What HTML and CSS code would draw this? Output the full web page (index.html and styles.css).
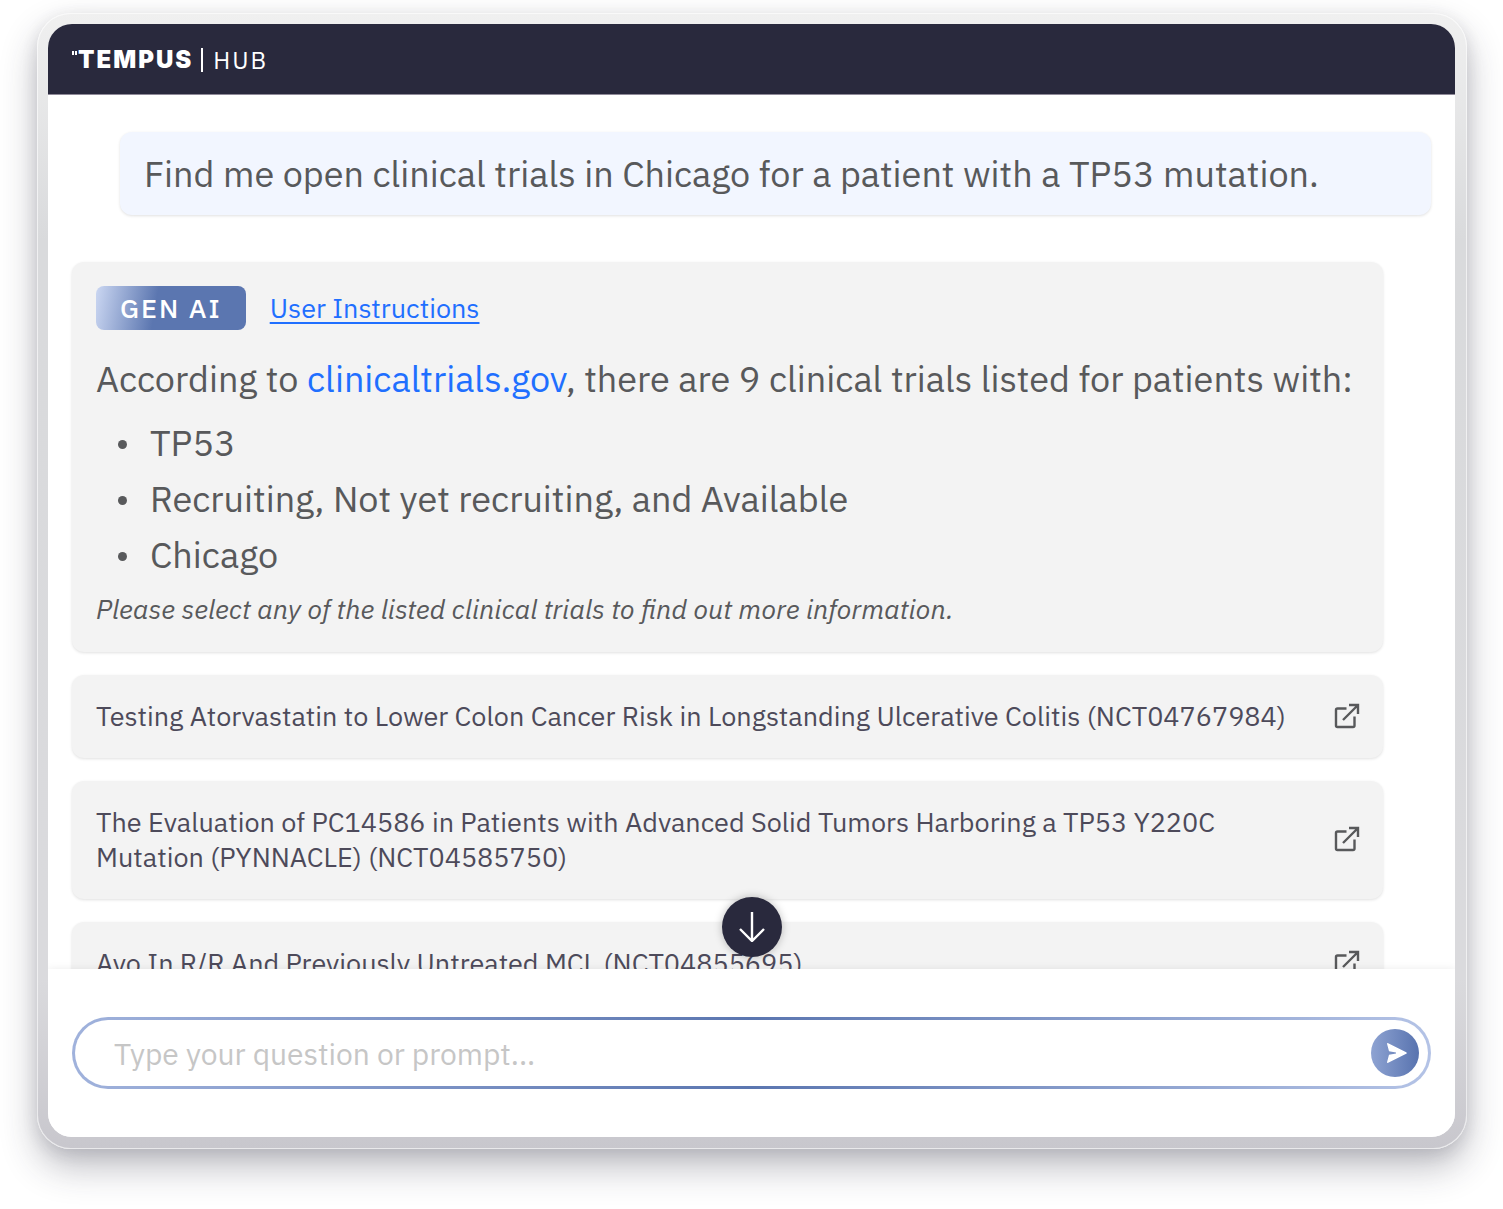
FILE: index.html
```html
<!DOCTYPE html>
<html lang="en">
<head>
    <meta charset="UTF-8">
    <meta name="viewport" content="width=device-width, initial-scale=1.0">
    <title>Tempus Hub</title>
    <link rel="stylesheet" href="styles.css">
</head>
<body>
    <div class="frame">
        <div class="screen">
            <!-- Header -->
            <header class="topbar">
                <svg class="logo-ticks" viewBox="0 0 6 17" aria-hidden="true">
                    <path d="M0 0h2v4H0zM3 0h2v4H3z"/>
                </svg>
                <span class="logo-name">TEMPUS</span>
                <span class="logo-divider"></span>
                <span class="logo-hub">HUB</span>
            </header>

            <!-- Conversation -->
            <main class="chat">
                <p class="bubble question">Find me open clinical trials in Chicago for a patient with a TP53 mutation.</p>

                <section class="bubble answer">
                    <div class="answer-head">
                        <span class="badge">GEN AI</span>
                        <a class="help-link" href="#">User Instructions</a>
                    </div>
                    <p class="answer-text">According to <a href="#">clinicaltrials.gov</a>, there are 9 clinical trials listed for patients with:</p>
                    <ul class="criteria">
                        <li>TP53</li>
                        <li>Recruiting, Not yet recruiting, and Available</li>
                        <li>Chicago</li>
                    </ul>
                    <p class="hint">Please select any of the listed clinical trials to find out more information.</p>
                </section>

                <a class="bubble trial" href="#">
                    <span>Testing Atorvastatin to Lower Colon Cancer Risk in Longstanding Ulcerative Colitis (NCT04767984)</span>
                    <svg class="open-icon" viewBox="0 0 24 24" aria-hidden="true">
                        <path d="M11.500 4.500H2.500Q1 4.500 1 6V21.500Q1 23 2.500 23H18Q19.500 23 19.500 21.500V12.500M14 1h9v9M23 1L8 16"/>
                    </svg>
                </a>
                <a class="bubble trial" href="#">
                    <span>The Evaluation of PC14586 in Patients with Advanced Solid Tumors Harboring a TP53 Y220C Mutation (PYNNACLE) (NCT04585750)</span>
                    <svg class="open-icon" viewBox="0 0 24 24" aria-hidden="true">
                        <path d="M11.500 4.500H2.500Q1 4.500 1 6V21.500Q1 23 2.500 23H18Q19.500 23 19.500 21.500V12.500M14 1h9v9M23 1L8 16"/>
                    </svg>
                </a>
                <a class="bubble trial" href="#">
                    <span>Avo In R/R And Previously Untreated MCL (NCT04855695)</span>
                    <svg class="open-icon" viewBox="0 0 24 24" aria-hidden="true">
                        <path d="M11.500 4.500H2.500Q1 4.500 1 6V21.500Q1 23 2.500 23H18Q19.500 23 19.500 21.500V12.500M14 1h9v9M23 1L8 16"/>
                    </svg>
                </a>
            </main>

            <!-- Prompt -->
            <form class="composer">
                <button class="scroll-down" type="button" aria-label="Scroll down">
                    <svg viewBox="0 0 30 30" aria-hidden="true">
                        <path d="M15 0v28M3 17l12 12 12-12"/>
                    </svg>
                </button>
                <div class="prompt-box">
                    <input class="prompt" type="text" placeholder="Type your question or prompt..." aria-label="Type your question or prompt">
                    <button class="send" type="submit" aria-label="Send">
                        <svg viewBox="0 0 20 20" aria-hidden="true">
                            <path d="M0 0.800Q0 -0.300 1.200 0.200L19.200 9.200Q20.500 10 19.200 10.800L1.200 19.800Q0 20.300 0 19.200L2 11.800 9 10.600V9.400L2 8.200Z"/>
                        </svg>
                    </button>
                </div>
            </form>
        </div>
    </div>
</body>
</html>
```
FILE: styles.css
```css
* {
    box-sizing: border-box;
}
body {
    font-family: 'IBM Plex Sans', 'Roboto', sans-serif;
    display: flex;
    height: 100vh;
    margin: 0;
    padding: 13px 36px 60px 37px;
    background-color: #fff;
    color: #58595b;
}
p, ul {
    margin: 0;
}
.frame {
    flex: 1;
    display: flex;
    min-width: 0;
    padding: 10px 11px 11px 10px;
    border: 1px solid rgba(255, 255, 255, 0.6);
    border-radius: 34px;
    background: linear-gradient(#f0f0f0, #d9dadc 20%, #dadadd 85%, #c8c7cd) border-box;
    box-shadow: 0 18px 36px rgba(40, 40, 60, 0.3), 0 4px 16px rgba(40, 40, 60, 0.12);
}
.screen {
    flex: 1;
    display: flex;
    flex-direction: column;
    min-width: 0;
    border-radius: 24px;
    background-color: #fff;
    overflow: hidden;
}

/* Header */
.topbar {
    display: flex;
    align-items: center;
    flex-shrink: 0;
    height: 71px;
    padding: 1px 24px 0;
    background-color: #29293d;
    border-bottom: 1px solid #8f8a99;
    color: #fff;
}
.logo-ticks {
    width: 6px;
    height: 17px;
    fill: #fff;
}
.logo-name {
    font-family: 'Inter', sans-serif;
    font-size: 24px;
    font-weight: 900;
    letter-spacing: 2px;
}
.logo-divider {
    width: 2px;
    height: 24px;
    margin: 0 10px 0 8px;
    background-color: #fff;
}
.logo-hub {
    font-size: 24px;
    letter-spacing: 2px;
}

/* Conversation */
.chat {
    flex: 1;
    display: flex;
    flex-direction: column;
    gap: 23px;
    min-height: 0;
    padding: 37px 72px 0 24px;
    overflow: hidden;
}
.bubble {
    flex-shrink: 0;
    border-radius: 12px;
    background-color: #f3f3f3;
    box-shadow: 0 1px 3px rgba(0, 0, 0, 0.12);
}
.question {
    margin: 0 -48px 24px 48px;
    padding: 18px 24px;
    background-color: #f2f6ff;
    font-size: 36px;
    line-height: 47px;
}
.answer {
    padding: 24px;
}
.answer-head {
    display: flex;
    align-items: center;
    gap: 24px;
    margin-bottom: 24px;
}
.badge {
    padding: 0 24px;
    border-radius: 8px;
    background: linear-gradient(100deg, #cbd7f2, #5b76b0 40%);
    color: #fff;
    font-size: 27px;
    font-weight: 500;
    line-height: 44px;
    letter-spacing: 2px;
}
.help-link {
    color: #1f6fff;
    font-size: 27px;
    line-height: 34px;
    text-decoration-thickness: 2px;
    text-underline-offset: 4px;
}
.answer-text {
    margin-bottom: 11px;
    font-size: 36px;
    line-height: 50px;
}
.answer-text a {
    color: #1f6fff;
    text-decoration: none;
}
.criteria {
    margin-bottom: 9px;
    padding: 0;
    list-style: none;
    font-size: 36px;
    line-height: 56px;
}
.criteria li {
    display: flex;
    align-items: center;
    gap: 23px;
    padding-left: 22px;
}
.criteria li::before {
    content: "";
    width: 9px;
    height: 9px;
    margin-top: 2px;
    border-radius: 50%;
    background-color: #58595b;
}
.hint {
    padding-bottom: 2px;
    font-size: 27px;
    font-style: italic;
    line-height: 34px;
}
.trial {
    display: flex;
    align-items: center;
    justify-content: space-between;
    gap: 48px;
    padding: 23px 24px 25px;
    color: #4d4a5a;
    font-size: 27px;
    line-height: 35px;
    text-decoration: none;
}
.open-icon {
    flex-shrink: 0;
    width: 24px;
    height: 24px;
    fill: none;
    stroke: #58595b;
    stroke-width: 2.4;
    overflow: visible;
}

/* Prompt */
.composer {
    position: relative;
    flex-shrink: 0;
    padding: 48px 24px;
    background-color: #fff;
    box-shadow: 0 0 8px rgba(0, 0, 0, 0.08);
}
.scroll-down {
    position: absolute;
    top: -72px;
    left: 50%;
    display: flex;
    align-items: center;
    justify-content: center;
    width: 60px;
    height: 60px;
    margin-left: -30px;
    padding: 0;
    border: none;
    border-radius: 50%;
    background-color: #29293d;
    box-shadow: 0 0 8px rgba(0, 0, 0, 0.25);
    cursor: pointer;
}
.scroll-down svg {
    width: 30px;
    height: 30px;
    fill: none;
    stroke: #fff;
    stroke-width: 2.4;
}
.prompt-box {
    display: flex;
    align-items: center;
    height: 72px;
    padding: 0 9px 0 39px;
    border: 3px solid transparent;
    border-radius: 36px;
    background: linear-gradient(#fff, #fff) padding-box, linear-gradient(90deg, #a0b2dc, #5b76b0 50%, #b4c3e6) border-box;
}
.prompt {
    flex: 1;
    min-width: 0;
    padding: 0;
    border: none;
    outline: none;
    background: none;
    color: #58595b;
    font-family: inherit;
    font-size: 30px;
}
.prompt::placeholder {
    color: #c6c6c6;
}
.send {
    display: flex;
    align-items: center;
    justify-content: center;
    width: 48px;
    height: 48px;
    padding: 0 0 0 4px;
    border: none;
    border-radius: 50%;
    background: linear-gradient(90deg, #8ea3d2, #5873af);
    cursor: pointer;
}
.send svg {
    width: 20px;
    height: 20px;
    fill: #fff;
}
```
